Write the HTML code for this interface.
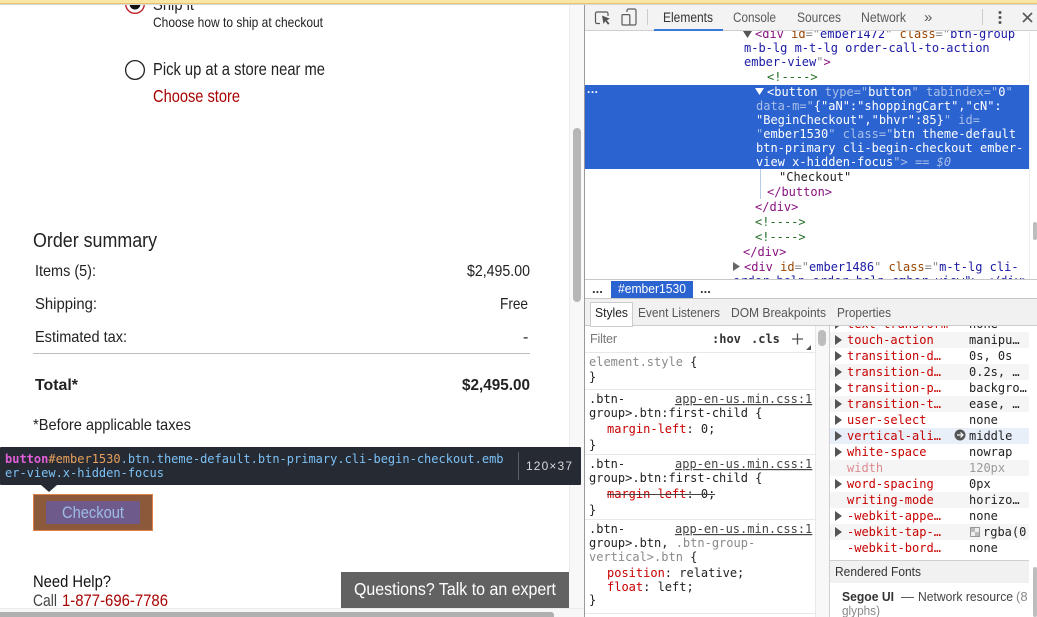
<!DOCTYPE html>
<html><head><meta charset="utf-8"><style>
html,body{margin:0;padding:0;width:1037px;height:617px;overflow:hidden;background:#fff}
svg{display:block;position:absolute;left:0;top:0}
text{white-space:pre}
.s{font-family:"Liberation Sans",sans-serif}
.m{font-family:"DejaVu Sans Mono","Liberation Mono",monospace;font-size:12px}
.t{fill:#881280}.a{fill:#994500}.v{fill:#1a1aa6}.g{fill:#8a8a8a}.c{fill:#236e25}
.w{fill:#fff}.d{fill:#a9bfe8}
.r{fill:#c80000}
.k{fill:#222}
</style></head><body>
<svg width="1037" height="617" viewBox="0 0 1037 617" xmlns="http://www.w3.org/2000/svg">
<defs>
<clipPath id="dom"><rect x="585" y="31" width="444" height="248"/></clipPath>
<clipPath id="st"><rect x="585" y="326" width="452" height="291"/></clipPath>
<clipPath id="pg"><rect x="0" y="5" width="570" height="603"/></clipPath>
</defs>
<rect width="1037" height="617" fill="#fff"/>

<!-- page scrollbars -->
<rect x="569" y="5" width="16" height="603" fill="#f8f8f8"/>
<rect x="569" y="5" width="1" height="567" fill="#ececec"/>
<rect x="573" y="128" width="8" height="174" rx="4" fill="#b6b6b6"/>
<rect x="0" y="608" width="585" height="9" fill="#f7f7f7"/>
<rect x="0" y="608" width="585" height="1" fill="#ececec"/>
<path d="M0 612H551a3 3 0 0 1 3 3V617H0Z" fill="#b0b0b0"/>

<!-- left page -->
<g clip-path="url(#pg)">
<circle cx="135" cy="4" r="9.3" fill="#fff" stroke="#c0242c" stroke-width="1.4"/>
<circle cx="135" cy="4" r="5.5" fill="#111"/>
<text class="s" x="153" y="10" font-size="16.5" fill="#222" textLength="41" lengthAdjust="spacingAndGlyphs">Ship it</text>
<text class="s" x="153" y="27" font-size="14" fill="#222" textLength="170" lengthAdjust="spacingAndGlyphs">Choose how to ship at checkout</text>
<circle cx="135" cy="70" r="9.4" fill="#fff" stroke="#222" stroke-width="1.3"/>
<text class="s" x="153" y="75" font-size="17.5" fill="#222" textLength="172" lengthAdjust="spacingAndGlyphs">Pick up at a store near me</text>
<text class="s" x="153" y="102" font-size="17.5" fill="#a80000" textLength="87" lengthAdjust="spacingAndGlyphs">Choose store</text>
<text class="s" x="33" y="247" font-size="20" fill="#222" textLength="124" lengthAdjust="spacingAndGlyphs">Order summary</text>
<text class="s" x="35" y="276" font-size="16" fill="#222" textLength="61" lengthAdjust="spacingAndGlyphs">Items (5):</text>
<text class="s" x="467" y="276" font-size="16" fill="#222" textLength="63" lengthAdjust="spacingAndGlyphs">$2,495.00</text>
<text class="s" x="35" y="309" font-size="16" fill="#222" textLength="62" lengthAdjust="spacingAndGlyphs">Shipping:</text>
<text class="s" x="500" y="309" font-size="16" fill="#222" textLength="28" lengthAdjust="spacingAndGlyphs">Free</text>
<text class="s" x="35" y="342" font-size="16" fill="#222" textLength="92" lengthAdjust="spacingAndGlyphs">Estimated tax:</text>
<text class="s" x="523" y="342" font-size="16" fill="#222">-</text>
<rect x="33" y="353" width="497" height="1" fill="#bdbdbd"/>
<text class="s" x="35" y="390" font-size="16" font-weight="700" fill="#222" textLength="43" lengthAdjust="spacingAndGlyphs">Total*</text>
<text class="s" x="462" y="390" font-size="16" font-weight="700" fill="#222" textLength="68" lengthAdjust="spacingAndGlyphs">$2,495.00</text>
<text class="s" x="33" y="430" font-size="16" fill="#222" textLength="158" lengthAdjust="spacingAndGlyphs">*Before applicable taxes</text>

<!-- highlighted button -->
<rect x="33" y="494" width="120" height="37" fill="#8c5a3a"/>
<rect x="33.5" y="494.5" width="119" height="36" fill="none" stroke="#e0814a"/>
<rect x="46" y="501" width="94" height="23" fill="#6f5b8b"/>
<text class="s" x="62" y="518" font-size="17" fill="#9dbde6" textLength="62" lengthAdjust="spacingAndGlyphs">Checkout</text>

<text class="s" x="33" y="587" font-size="16.5" fill="#111" textLength="78" lengthAdjust="spacingAndGlyphs">Need Help?</text>
<text class="s" x="33" y="606" font-size="16.5" fill="#444" textLength="24" lengthAdjust="spacingAndGlyphs">Call</text>
<text class="s" x="62" y="606" font-size="16.5" fill="#a80000" textLength="106" lengthAdjust="spacingAndGlyphs">1-877-696-7786</text>
<rect x="341" y="572" width="228" height="36" fill="#626262"/>
<text class="s" x="354" y="595" font-size="17.5" fill="#fff" textLength="202" lengthAdjust="spacingAndGlyphs">Questions? Talk to an expert</text>
</g>

<!-- tooltip -->
<rect x="0" y="447" width="581" height="38" rx="1" fill="#252a33"/>
<polygon points="41,485 57,485 49,492" fill="#252a33"/>
<text class="m" x="5" y="463" fill="#7cc0f5"><tspan fill="#e25ed8" font-weight="700">button</tspan><tspan fill="#e8a05c">#ember1530</tspan>.btn.theme-default.btn-primary.cli-begin-checkout.emb</text>
<text class="m" x="5" y="477" fill="#7cc0f5">er-view.x-hidden-focus</text>
<rect x="518" y="452" width="1" height="28" fill="#5b5f66"/>
<text class="s" x="526" y="470" font-size="12" fill="#d9d9d9" textLength="46">120×37</text>

<!-- top strip -->
<rect x="0" y="0" width="1037" height="4" fill="#f9e5a6"/>
<rect x="0" y="3" width="1037" height="1" fill="#e9c46c"/>
<rect x="0" y="4" width="1037" height="1" fill="#d8d8d8"/>

<!-- devtools -->
<rect x="585" y="5" width="452" height="612" fill="#fff"/>
<rect x="584" y="5" width="1" height="612" fill="#9a9a9a"/>
<rect x="585" y="5" width="452" height="26" fill="#f3f3f3"/>
<rect x="585" y="30" width="452" height="1" fill="#cfcfcf"/>
<rect x="654" y="29" width="69" height="2" fill="#3879d9"/>
<!-- inspect icon -->
<path d="M600 23.5H597a1.5 1.5 0 0 1-1.500-1.500V13.500a1.500 1.500 0 0 1 1.500-1.500H606.500a1.500 1.500 0 0 1 1.500 1.500V16" fill="none" stroke="#5a5a5a" stroke-width="1.200"/>
<path d="M602 15.500L610 18.700L606.800 20.200L609.500 23.500L608 24.700L605.300 21.300L603.500 24Z" fill="#555"/>
<!-- device icon -->
<path d="M627 12V10.500a1.500 1.500 0 0 1 1.500-1.500H634.500a1.500 1.500 0 0 1 1.500 1.500V23.500a1.500 1.500 0 0 1-1.500 1.500H630" fill="none" stroke="#5a5a5a" stroke-width="1.200"/>
<rect x="622" y="14.600" width="7.800" height="10.400" rx="1" fill="none" stroke="#5a5a5a" stroke-width="1.200"/>
<rect x="647" y="9" width="1" height="16" fill="#ccc"/>
<text class="s" x="663" y="22" font-size="13.500" fill="#333" textLength="50" lengthAdjust="spacingAndGlyphs">Elements</text>
<text class="s" x="733" y="22" font-size="13.500" fill="#5a5a5a" textLength="43" lengthAdjust="spacingAndGlyphs">Console</text>
<text class="s" x="797" y="22" font-size="13.500" fill="#5a5a5a" textLength="44" lengthAdjust="spacingAndGlyphs">Sources</text>
<text class="s" x="861" y="22" font-size="13.500" fill="#5a5a5a" textLength="45" lengthAdjust="spacingAndGlyphs">Network</text>
<text class="s" x="924" y="22" font-size="15" fill="#5a5a5a">»</text>
<rect x="982" y="9" width="1" height="16" fill="#ccc"/>
<circle cx="1000" cy="12.500" r="1.500" fill="#555"/><circle cx="1000" cy="17.500" r="1.500" fill="#555"/><circle cx="1000" cy="22.500" r="1.500" fill="#555"/>
<path d="M1023 13L1032 22M1032 13L1023 22" stroke="#5a5a5a" stroke-width="1.700" fill="none"/>

<!-- DOM tree -->
<rect x="585" y="85" width="444" height="84" fill="#2b63d1"/>
<g clip-path="url(#dom)">
<polygon points="743,31 752,31 747.500,38" fill="#555"/>
<text class="m" x="755" y="38"><tspan class="t">&lt;div </tspan><tspan class="a">id</tspan><tspan class="g">="</tspan><tspan class="v">ember1472</tspan><tspan class="g">" </tspan><tspan class="a">class</tspan><tspan class="g">="</tspan><tspan class="v">btn-group</tspan></text>
<text class="m v" x="744" y="52">m-b-lg m-t-lg order-call-to-action</text>
<text class="m" x="744" y="66"><tspan class="v">ember-view</tspan><tspan class="g">"</tspan><tspan class="t">&gt;</tspan></text>
<text class="m c" x="767" y="81">&lt;!----&gt;</text>
<text class="w" x="587" y="93" font-family="Liberation Sans" font-size="12" font-weight="700" letter-spacing="0.500">...</text>
<polygon points="755,88 764,88 759.500,95" fill="#fff"/>
<text class="m" x="767" y="96"><tspan class="w">&lt;button </tspan><tspan class="d">type="</tspan><tspan class="w">button</tspan><tspan class="d">" tabindex="</tspan><tspan class="w">0</tspan><tspan class="d">"</tspan></text>
<text class="m" x="756" y="110"><tspan class="d">data-m="</tspan><tspan class="w">{"aN":"shoppingCart","cN":</tspan></text>
<text class="m" x="756" y="124"><tspan class="w">"BeginCheckout","bhvr":85}</tspan><tspan class="d">" id=</tspan></text>
<text class="m" x="756" y="138"><tspan class="d">"</tspan><tspan class="w">ember1530</tspan><tspan class="d">" class="</tspan><tspan class="w">btn theme-default</tspan></text>
<text class="m w" x="756" y="152">btn-primary cli-begin-checkout ember-</text>
<text class="m" x="756" y="166"><tspan class="w">view x-hidden-focus</tspan><tspan class="d">"&gt; == </tspan><tspan class="d" font-style="italic">$0</tspan></text>
<rect x="760" y="169" width="1" height="30" fill="#b8cbe8"/>
<text class="m k" x="779" y="181">"Checkout"</text>
<text class="m t" x="767" y="196">&lt;/button&gt;</text>
<text class="m t" x="755" y="211">&lt;/div&gt;</text>
<text class="m c" x="755" y="226">&lt;!----&gt;</text>
<text class="m c" x="755" y="241">&lt;!----&gt;</text>
<text class="m t" x="743" y="256">&lt;/div&gt;</text>
<polygon points="733,262 733,271 740,266.500" fill="#666"/>
<text class="m" x="744" y="271"><tspan class="t">&lt;div </tspan><tspan class="a">id</tspan><tspan class="g">="</tspan><tspan class="v">ember1486</tspan><tspan class="g">" </tspan><tspan class="a">class</tspan><tspan class="g">="</tspan><tspan class="v">m-t-lg cli-</tspan></text>
<text class="m v" x="733" y="285">order-help order-help ember-view"&gt;…&lt;/div&gt;</text>
</g>
<rect x="1029" y="31" width="8" height="248" fill="#fff"/>
<rect x="1029" y="31" width="1" height="248" fill="#eee"/>
<rect x="1033" y="222" width="4" height="18" rx="2" fill="#bdbdbd"/>

<!-- breadcrumb -->
<rect x="585" y="279" width="452" height="1" fill="#c8c8c8"/>
<rect x="611" y="281" width="82" height="17" fill="#2b63d1"/>
<text class="s" x="592" y="293" font-size="13" font-weight="700" fill="#333">...</text>
<text class="s" x="618" y="293" font-size="13" fill="#fff" textLength="68" lengthAdjust="spacingAndGlyphs">#ember1530</text>
<text class="s" x="700" y="293" font-size="13" font-weight="700" fill="#333">...</text>
<rect x="585" y="298" width="452" height="1" fill="#c8c8c8"/>

<!-- sidebar tabs -->
<rect x="585" y="299" width="452" height="27" fill="#f1f1f1"/>
<rect x="585" y="325" width="452" height="1" fill="#ccc"/>
<rect x="590.500" y="302.500" width="42" height="24" fill="#fff" stroke="#ccc"/>
<text class="s" x="595" y="317" font-size="13" fill="#222" textLength="33" lengthAdjust="spacingAndGlyphs">Styles</text>
<text class="s" x="638" y="317" font-size="13" fill="#555" textLength="82" lengthAdjust="spacingAndGlyphs">Event Listeners</text>
<text class="s" x="731" y="317" font-size="13" fill="#555" textLength="95" lengthAdjust="spacingAndGlyphs">DOM Breakpoints</text>
<text class="s" x="837" y="317" font-size="13" fill="#555" textLength="54" lengthAdjust="spacingAndGlyphs">Properties</text>

<!-- styles pane -->
<g clip-path="url(#st)">
<text class="s" x="590" y="343" font-size="12.500" fill="#777" textLength="27">Filter</text>
<text class="m" x="712" y="343" font-weight="700" fill="#333">:hov</text>
<text class="m" x="751" y="343" font-weight="700" fill="#333">.cls</text>
<path d="M792 339H803M797.500 333.500V344.500" stroke="#555" stroke-width="1.300" fill="none"/>
<polygon points="811,345 811,350 806,350" fill="#555"/>
<rect x="585" y="352" width="230" height="1" fill="#e8e8e8"/>
<text class="m" x="589" y="366"><tspan class="g">element.style </tspan><tspan class="k">{</tspan></text>
<text class="m k" x="589" y="381">}</text>
<rect x="585" y="389" width="230" height="1" fill="#e8e8e8"/>
<text class="m k" x="589" y="403">.btn-</text>
<text class="m" x="675" y="403" fill="#444" text-decoration="underline">app-en-us.min.css:1</text>
<text class="m k" x="589" y="417">group&gt;.btn:first-child {</text>
<text class="m" x="607" y="433"><tspan class="r">margin-left</tspan><tspan class="k">: 0;</tspan></text>
<text class="m k" x="589" y="449">}</text>
<rect x="585" y="454" width="230" height="1" fill="#e8e8e8"/>
<text class="m k" x="589" y="468">.btn-</text>
<text class="m" x="675" y="468" fill="#444" text-decoration="underline">app-en-us.min.css:1</text>
<text class="m k" x="589" y="482">group&gt;.btn:first-child {</text>
<text class="m" x="607" y="498"><tspan class="r">margin-left</tspan><tspan class="k">: 0;</tspan></text>
<rect x="607" y="494" width="108" height="1" fill="#444"/>
<text class="m k" x="589" y="514">}</text>
<rect x="585" y="519" width="230" height="1" fill="#e8e8e8"/>
<text class="m k" x="589" y="533">.btn-</text>
<text class="m" x="675" y="533" fill="#444" text-decoration="underline">app-en-us.min.css:1</text>
<text class="m" x="589" y="547"><tspan class="k">group&gt;.btn, </tspan><tspan class="g">.btn-group-</tspan></text>
<text class="m" x="589" y="561"><tspan class="g">vertical&gt;.btn </tspan><tspan class="k">{</tspan></text>
<text class="m" x="607" y="577"><tspan class="r">position</tspan><tspan class="k">: relative;</tspan></text>
<text class="m" x="607" y="591"><tspan class="r">float</tspan><tspan class="k">: left;</tspan></text>
<text class="m k" x="589" y="604">}</text>
<rect x="585" y="613" width="230" height="1" fill="#e8e8e8"/>
</g>
<rect x="815" y="326" width="14" height="291" fill="#f8f8f8"/>
<rect x="815" y="326" width="1" height="291" fill="#e8e8e8"/>
<rect x="829" y="326" width="1" height="291" fill="#d0d0d0"/>
<rect x="818" y="330" width="8" height="16" rx="4" fill="#bdbdbd"/>

<!-- computed pane -->
<g clip-path="url(#st)">
<rect x="830" y="332" width="199" height="16" fill="#f5f5f5"/>
<rect x="830" y="364" width="199" height="16" fill="#f5f5f5"/>
<rect x="830" y="396" width="199" height="16" fill="#f5f5f5"/>
<rect x="830" y="428" width="199" height="16" fill="#e8eff9"/>
<rect x="830" y="460" width="199" height="16" fill="#f5f5f5"/>
<rect x="830" y="492" width="199" height="16" fill="#f5f5f5"/>
<rect x="830" y="524" width="199" height="16" fill="#f5f5f5"/>

<polygon points="835,319 835,329 842,324" fill="#555"/>
<text class="m r" x="847" y="328">text-transform</text><text class="m k" x="969" y="328">none</text>
<polygon points="835,335 835,345 842,340" fill="#555"/>
<text class="m r" x="847" y="344">touch-action</text><text class="m k" x="969" y="344">manipu…</text>
<polygon points="835,351 835,361 842,356" fill="#555"/>
<text class="m r" x="847" y="360">transition-d…</text><text class="m k" x="969" y="360">0s, 0s</text>
<polygon points="835,367 835,377 842,372" fill="#555"/>
<text class="m r" x="847" y="376">transition-d…</text><text class="m k" x="969" y="376">0.2s, …</text>
<polygon points="835,383 835,393 842,388" fill="#555"/>
<text class="m r" x="847" y="392">transition-p…</text><text class="m k" x="969" y="392">backgro…</text>
<polygon points="835,399 835,409 842,404" fill="#555"/>
<text class="m r" x="847" y="408">transition-t…</text><text class="m k" x="969" y="408">ease, …</text>
<polygon points="835,415 835,425 842,420" fill="#555"/>
<text class="m r" x="847" y="424">user-select</text><text class="m k" x="969" y="424">none</text>
<polygon points="835,431 835,441 842,436" fill="#555"/>
<text class="m r" x="847" y="440">vertical-ali…</text><text class="m k" x="969" y="440">middle</text>
<circle cx="960" cy="435" r="5.500" fill="#555"/>
<path d="M957 435H962.500M960.500 432.500L963 435L960.500 437.500" stroke="#fff" stroke-width="1.200" fill="none"/>
<polygon points="835,447 835,457 842,452" fill="#555"/>
<text class="m r" x="847" y="456">white-space</text><text class="m k" x="969" y="456">nowrap</text>
<text class="m" x="847" y="472" fill="#dd8a90">width</text><text class="m" x="969" y="472" fill="#9a9a9a">120px</text>
<polygon points="835,479 835,489 842,484" fill="#555"/>
<text class="m r" x="847" y="488">word-spacing</text><text class="m k" x="969" y="488">0px</text>
<text class="m r" x="847" y="504">writing-mode</text><text class="m k" x="969" y="504">horizo…</text>
<polygon points="835,511 835,521 842,516" fill="#555"/>
<text class="m r" x="847" y="520">-webkit-appe…</text><text class="m k" x="969" y="520">none</text>
<polygon points="835,527 835,537 842,532" fill="#555"/>
<text class="m r" x="847" y="536">-webkit-tap-…</text>
<rect x="970.500" y="527.500" width="9" height="9" fill="#eee" stroke="#999"/>
<rect x="971" y="528" width="4" height="4" fill="#bbb"/><rect x="975" y="532" width="4" height="4" fill="#bbb"/>
<text class="m k" x="983" y="536">rgba(0</text>
<text class="m r" x="847" y="552">-webkit-bord…</text><text class="m k" x="969" y="552">none</text>

<rect x="830" y="560" width="199" height="23" fill="#f1f1f1"/>
<rect x="830" y="560" width="199" height="1" fill="#d0d0d0"/>
<text class="s" x="835" y="576" font-size="13" fill="#333" textLength="86" lengthAdjust="spacingAndGlyphs">Rendered Fonts</text>
<text class="s" x="842" y="601" font-size="13" font-weight="700" fill="#333" textLength="52" lengthAdjust="spacingAndGlyphs">Segoe UI</text>
<text class="s" x="901" y="601" font-size="13" fill="#444" textLength="11">—</text>
<text class="s" x="918" y="601" font-size="13" fill="#444" textLength="95" lengthAdjust="spacingAndGlyphs">Network resource</text>
<text class="s" x="1016" y="601" font-size="13" fill="#888">(8</text>
<text class="s" x="842" y="615" font-size="13" fill="#888" textLength="38" lengthAdjust="spacingAndGlyphs">glyphs)</text>
</g>
<rect x="1029" y="326" width="8" height="291" fill="#fff"/>
<rect x="1033" y="567" width="4" height="50" rx="2" fill="#bdbdbd"/>
</svg>
</body></html>
